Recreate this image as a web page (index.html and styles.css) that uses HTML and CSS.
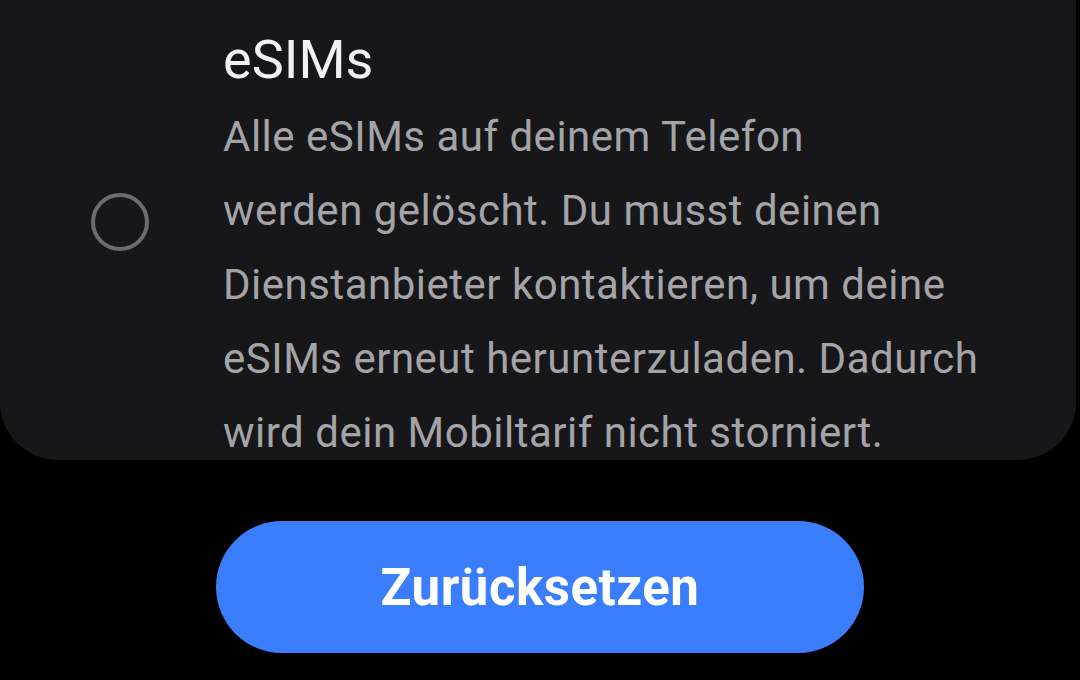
FILE: index.html
```html
<!DOCTYPE html>
<html lang="de">
<head>
<meta charset="utf-8">
<link rel="stylesheet" href="styles.css">
</head>
<body>
<div class="screen">
  <section class="card">
    <div class="radio-col">
      <span class="radio"></span>
    </div>
    <div class="text-col">
      <h2 class="title">eSIMs</h2>
      <p class="desc">Alle eSIMs auf deinem Telefon<br>werden gelöscht. Du musst deinen<br>Dienstanbieter kontaktieren, um deine<br>eSIMs erneut herunterzuladen. Dadurch<br>wird dein Mobiltarif nicht storniert.</p>
    </div>
  </section>
  <div class="actions">
    <button class="btn">Zurücksetzen</button>
  </div>
</div>
</body>
</html>
```

FILE: styles.css
```css
* { box-sizing: border-box; }
html, body {
  margin: 0;
  padding: 0;
  background: #000;
  width: 1080px;
  height: 680px;
  overflow: hidden;
}
.screen {
  display: flex;
  flex-direction: column;
  font-family: Roboto, "Noto Sans", sans-serif;
}
.card {
  width: 1076px;
  height: 460px;
  background: #171719;
  border-radius: 0 0 58px 58px;
  overflow: hidden;
  display: flex;
}
.radio-col {
  width: 223px;
  padding-left: 91px;
  padding-top: 193px;
  flex: none;
}
.radio {
  display: block;
  width: 58px;
  height: 58px;
  border: 4px solid #6c6c6e;
  border-radius: 50%;
}
.text-col {
  flex: 1;
  padding-top: 20px;
  white-space: nowrap;
}
.title {
  margin: 0;
  font-weight: 400;
  font-size: 54px;
  line-height: 80px;
  color: #f1f1f3;
}
.desc {
  margin: 0;
  font-size: 42px;
  line-height: 74px;
  letter-spacing: 0.5px;
  color: #a4a4a8;
}
.actions {
  padding-top: 61px;
  padding-left: 216px;
}
.btn {
  width: 648px;
  height: 132px;
  border: none;
  border-radius: 66px;
  background: #3a7dfd;
  color: #fff;
  font-family: Roboto, "Noto Sans", sans-serif;
  font-weight: 700;
  font-size: 51px;
  letter-spacing: 0.5px;
  padding: 0;
}
```
